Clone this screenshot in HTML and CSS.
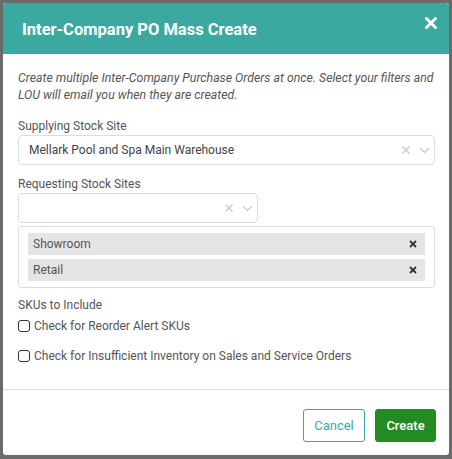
FILE: index.html
```html
<!DOCTYPE html>
<html>
<head>
<meta charset="utf-8">
<link rel="stylesheet" href="styles.css">
</head>
<body>
<div class="modal">
  <div class="header">
    <div class="title">Inter-Company PO Mass Create</div>
    <svg class="close" width="12" height="12" viewBox="0 0 12 12"><path d="M1.5 1.5 L10.5 10.5 M10.5 1.5 L1.5 10.5" stroke="#fff" stroke-width="2.8" stroke-linecap="square"/></svg>
  </div>
  <div class="body">
    <p class="desc">Create multiple Inter-Company Purchase Orders at once. Select your filters and LOU will email you when they are created.</p>
    <div class="label first">Supplying Stock Site</div>
    <div class="select full">
      <span class="value">Mellark Pool and Spa Main Warehouse</span>
      <span class="icons">
        <svg width="10" height="10" viewBox="0 0 10 10"><path d="M1.5 1.5 L8.5 8.5 M8.5 1.5 L1.5 8.5" stroke="#c8c8c8" stroke-width="1.4"/></svg>
        <svg width="11" height="7" viewBox="0 0 11 7"><path d="M1 1 L5.5 5.5 L10 1" fill="none" stroke="#c8c8c8" stroke-width="1.2"/></svg>
      </span>
    </div>
    <div class="label second">Requesting Stock Sites</div>
    <div class="select half">
      <span class="value"></span>
      <span class="icons">
        <svg width="10" height="10" viewBox="0 0 10 10"><path d="M1.5 1.5 L8.5 8.5 M8.5 1.5 L1.5 8.5" stroke="#c8c8c8" stroke-width="1.4"/></svg>
        <svg width="11" height="7" viewBox="0 0 11 7"><path d="M1 1 L5.5 5.5 L10 1" fill="none" stroke="#c8c8c8" stroke-width="1.2"/></svg>
      </span>
    </div>
    <div class="list">
      <div class="item"><span>Showroom</span><svg width="8" height="8" viewBox="0 0 8 8"><path d="M1 1 L7 7 M7 1 L1 7" stroke="#333" stroke-width="1.8"/></svg></div>
      <div class="item"><span>Retail</span><svg width="8" height="8" viewBox="0 0 8 8"><path d="M1 1 L7 7 M7 1 L1 7" stroke="#333" stroke-width="1.8"/></svg></div>
    </div>
    <div class="label skus">SKUs to Include</div>
    <label class="check c1"><span class="box"></span>Check for Reorder Alert SKUs</label>
    <label class="check c2"><span class="box"></span>Check for Insufficient Inventory on Sales and Service Orders</label>
  </div>
  <div class="footer">
    <button class="btn cancel">Cancel</button>
    <button class="btn create">Create</button>
  </div>
</div>
</body>
</html>
```
FILE: styles.css
```css
html, body {
  margin: 0;
  padding: 0;
  background: #6b6b6b;
  width: 452px;
  height: 459px;
  overflow: hidden;
  font-family: Roboto, "Liberation Sans", sans-serif;
}
body {
  padding: 3px;
  box-sizing: border-box;
}
.modal {
  width: 446px;
  height: 452px;
  background: #fff;
  border-radius: 3px;
  overflow: hidden;
  display: flex;
  flex-direction: column;
}
.header {
  background: #3ca9a1;
  height: 51px;
  display: flex;
  align-items: center;
  justify-content: space-between;
  padding: 0 12px 0 19px;
  color: #fff;
  flex: none;
}
.title {
  font-weight: bold;
  font-size: 16.5px;
  margin-top: 2px;
}
.close {
  margin-top: -12px;
}
.body {
  padding: 16px 15px 0 15px;
  flex: 1;
  color: #444;
}
.desc {
  margin: 0 -3px 0 0;
  font-style: italic;
  font-size: 12.3px;
  line-height: 17px;
  color: #555;
}
.label {
  font-size: 12px;
  color: #555;
  line-height: 16px;
  margin-bottom: 1px;
}
.label.first { margin-top: 14px; }
.label.second { margin-top: 11px; }
.select {
  height: 30px;
  box-sizing: border-box;
  border: 1px solid #ddd;
  border-radius: 4px;
  display: flex;
  align-items: center;
  justify-content: space-between;
  padding: 0 4px 0 10px;
  font-size: 12px;
  color: #444;
}
.select.full { width: 417px; }
.select.half { width: 240px; margin-bottom: 3px; }
.icons {
  display: flex;
  align-items: center;
  gap: 8px;
}
.list {
  width: 417px;
  height: 62px;
  box-sizing: border-box;
  border: 1px solid #ddd;
  border-radius: 3px;
  padding: 6px 9px 0 9px;
  display: flex;
  flex-direction: column;
  gap: 4px;
}
.item {
  background: #e5e5e5;
  height: 22px;
  display: flex;
  align-items: center;
  justify-content: space-between;
  padding: 0 8px 0 5px;
  font-size: 12px;
  color: #555;
}
.skus { margin-top: 9px; margin-bottom: 5px; }
.check {
  display: flex;
  align-items: center;
  font-size: 12px;
  color: #555;
  height: 16px;
}
.check.c2 { margin-top: 14px; }
.box {
  width: 10px;
  height: 10px;
  border: 1px solid #333;
  border-radius: 3px;
  margin-right: 4px;
  flex: none;
}
.footer {
  border-top: 1px solid #ddd;
  height: 66px;
  box-sizing: border-box;
  flex: none;
  display: flex;
  justify-content: flex-end;
  align-items: flex-start;
  gap: 10px;
  padding: 19px 13px 0 0;
}
.btn {
  height: 33px;
  font-family: Roboto, "Liberation Sans", sans-serif;
  font-size: 13px;
  border-radius: 3px;
  padding: 0;
  cursor: pointer;
}
.cancel {
  width: 62px;
  background: #fff;
  border: 1px solid #3ca9a1;
  color: #3ca9a1;
}
.create {
  width: 61px;
  background: #228b22;
  border: 1px solid #228b22;
  color: #fff;
  font-weight: 500;
}
```
